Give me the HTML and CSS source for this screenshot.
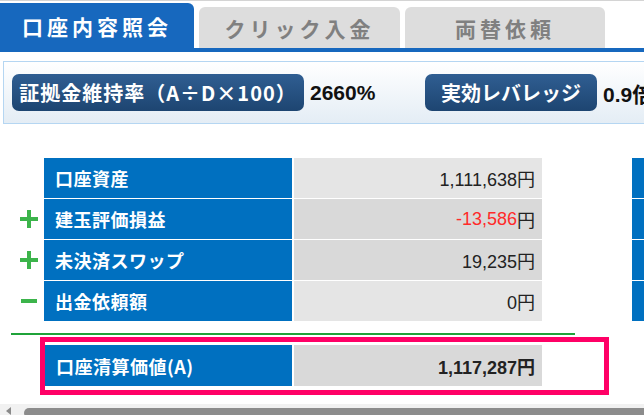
FILE: index.html
```html
<!DOCTYPE html>
<html lang="ja">
<head>
<meta charset="utf-8">
<title>口座内容照会</title>
<link rel="stylesheet" href="styles.css">
</head>
<body>
<div class="page">
  <div class="tabs">
    <div class="tab active">口座内容照会</div>
    <div class="tab t2">クリック入金</div>
    <div class="tab t3">両替依頼</div>
  </div>

  <div class="infobar">
    <span class="badge b1">証拠金維持率（A÷D×100）</span><span class="val v1">2660%</span>
    <span class="badge b2">実効レバレッジ</span><span class="val">0.9倍</span>
  </div>

  <div class="main">
    <div class="left">
      <div class="rows">
        <div class="row">
          <div class="sign"></div>
          <div class="label">口座資産</div>
          <div class="value light">1,111,638円</div>
        </div>
        <div class="row">
          <div class="sign"><svg width="18" height="18" viewBox="0 0 18 18"><rect x="0" y="7" width="18" height="4" fill="#3cb44b"/><rect x="7" y="0" width="4" height="18" fill="#3cb44b"/></svg></div>
          <div class="label">建玉評価損益</div>
          <div class="value dark"><span class="neg">-13,586</span>円</div>
        </div>
        <div class="row">
          <div class="sign"><svg width="18" height="18" viewBox="0 0 18 18"><rect x="0" y="7" width="18" height="4" fill="#3cb44b"/><rect x="7" y="0" width="4" height="18" fill="#3cb44b"/></svg></div>
          <div class="label">未決済スワップ</div>
          <div class="value dark">19,235円</div>
        </div>
        <div class="row">
          <div class="sign"><svg width="18" height="18" viewBox="0 0 18 18"><rect x="1" y="7" width="16" height="4" fill="#3cb44b"/></svg></div>
          <div class="label">出金依頼額</div>
          <div class="value light">0円</div>
        </div>
      </div>
      <div class="greenline"></div>
      <div class="total">
        <div class="label">口座清算価値(A)</div>
        <div class="value dark bold">1,117,287円</div>
      </div>
    </div>
    <div class="right">
      <div class="rcell"></div>
      <div class="rcell"></div>
      <div class="rcell"></div>
      <div class="rcell"></div>
    </div>
  </div>

  <div class="scrollbar">
    <span class="arrow"></span>
    <span class="thumb"></span>
  </div>
</div>
</body>
</html>
```

FILE: styles.css
```css
html, body {
  margin: 0;
  padding: 0;
  background: #fff;
  overflow: hidden;
}
body {
  font-family: "Noto Sans CJK JP", "Liberation Sans", sans-serif;
}
.page {
  width: 644px;
  height: 415px;
  overflow: hidden;
}

/* Tabs */
.tabs {
  display: flex;
  align-items: flex-end;
  height: 47px;
  border-top: 1px solid #d4d4d4;
  border-bottom: 4px solid #1768be;
  gap: 5px;
}
.tab {
  height: 41px;
  width: 201px;
  background: #dddddd;
  color: #808080;
  border-radius: 6px 6px 0 0;
  font-size: 21px;
  font-weight: bold;
  letter-spacing: 4px;
  display: flex;
  align-items: center;
  justify-content: center;
  box-sizing: border-box;
  padding-top: 1px;
}
.tab.active {
  width: 194px;
  height: 45px;
  background: #1768be;
  color: #fff;
  border-radius: 0 6px 0 0;
  padding-top: 0;
}
.tab.t3 {
  width: 200px;
}

/* Info bar */
.infobar {
  margin: 9px 0 0 3px;
  width: 700px;
  height: 61px;
  border: 1px solid #b5d6f2;
  background: linear-gradient(#ffffff, #e4edf5);
  display: flex;
  align-items: center;
  padding-left: 8px;
  box-sizing: content-box;
}
.badge {
  height: 37px;
  border-radius: 7px;
  background: linear-gradient(#305e92, #1d4571);
  color: #fff;
  font-size: 20px;
  font-weight: bold;
  display: flex;
  align-items: center;
  justify-content: center;
  box-sizing: border-box;
}
.b1 {
  width: 292px;
  letter-spacing: 1px;
}
.b2 {
  width: 172px;
}
.val {
  font-family: "Liberation Sans", "Noto Sans CJK JP", sans-serif;
  font-weight: bold;
  font-size: 21px;
  color: #111;
  padding-left: 6px;
}
.v1 {
  width: 115px;
}

/* Main table */
.main {
  display: flex;
  margin-top: 34px;
}
.left {
  width: 632px;
}
.rows {
  display: flex;
  flex-direction: column;
  gap: 1px;
}
.row {
  display: flex;
  height: 40px;
}
.sign {
  width: 44px;
  display: flex;
  align-items: center;
  justify-content: flex-end;
  padding-right: 6px;
  box-sizing: border-box;
}
.sign svg {
  display: block;
}
.label {
  width: 248px;
  background: #0070c0;
  color: #fff;
  font-size: 18px;
  font-weight: bold;
  display: flex;
  align-items: center;
  padding-left: 11px;
  box-sizing: border-box;
  letter-spacing: 0.5px;
}
.value {
  width: 248px;
  margin-left: 2px;
  font-family: "Liberation Sans", "Noto Sans CJK JP", sans-serif;
  font-size: 18px;
  color: #222;
  display: flex;
  align-items: center;
  justify-content: flex-end;
  padding-right: 7px;
  box-sizing: border-box;
}
.light {
  background: #e5e5e5;
}
.dark {
  background: #d9d9d9;
}
.neg {
  color: #ff2a2a;
}
.bold {
  font-weight: bold;
}

.greenline {
  margin: 12px 0 0 11px;
  width: 564px;
  height: 2px;
  background: #1fa339;
}

.total {
  margin: 2px 0 0 40px;
  width: 569px;
  height: 58px;
  border: 5px solid #ff0066;
  box-sizing: border-box;
  display: flex;
  padding: 3px 0 4px 0;
}
.total .label {
  width: 247px;
  height: 41px;
}
.total .value {
  height: 41px;
}

/* Right column */
.right {
  flex: 1;
  display: flex;
  flex-direction: column;
  gap: 1px;
}
.rcell {
  height: 40px;
  background: #0070c0;
}

/* Scrollbar */
.scrollbar {
  margin-top: 9px;
  height: 12px;
  background: #f1f1f1;
  position: relative;
}
.arrow {
  position: absolute;
  left: 6px;
  top: 3px;
  width: 0;
  height: 0;
  border-top: 4px solid transparent;
  border-bottom: 4px solid transparent;
  border-right: 5px solid #8a8a8a;
}
.thumb {
  position: absolute;
  left: 24px;
  top: 4px;
  width: 640px;
  height: 10px;
  border-radius: 5px;
  background: #8c8c8c;
}
```
